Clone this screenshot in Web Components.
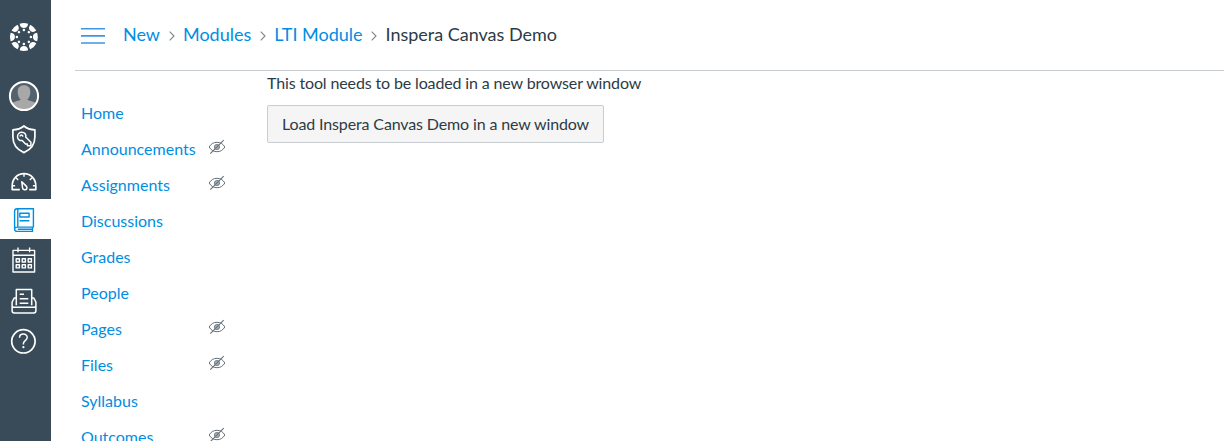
<!DOCTYPE html>
<html lang="en">
<head>
<meta charset="utf-8">
<title>Inspera Canvas Demo</title>
<style>
  html, body { height: 100%; }
  body {
    margin: 0;
    overflow: hidden;
    background: #fff;
    color: #2d3b45;
    font: 16px/24px Lato, "Liberation Sans", sans-serif;
    --brand: #008ee2;
    --rail: #394b58;
    --line: #c7cdd1;
  }
</style>
</head>
<body>
<lms-app>
  <lms-rail slot="rail">
    <rail-item icon="logo" style="--h: 74px"></rail-item>
    <rail-item icon="avatar" style="--h: 45px"></rail-item>
    <rail-item icon="admin"></rail-item>
    <rail-item icon="dashboard"></rail-item>
    <rail-item icon="courses" active></rail-item>
    <rail-item icon="calendar" style="--h: 41px"></rail-item>
    <rail-item icon="inbox" style="--h: 41px"></rail-item>
    <rail-item icon="help" style="--h: 41px"></rail-item>
  </lms-rail>
  <lms-crumbs slot="header">
    <lms-crumb href="#">New</lms-crumb>
    <lms-crumb href="#">Modules</lms-crumb>
    <lms-crumb href="#">LTI Module</lms-crumb>
    <lms-crumb>Inspera Canvas Demo</lms-crumb>
  </lms-crumbs>
  <course-nav slot="nav">
    <nav-entry>Home</nav-entry>
    <nav-entry unlisted>Announcements</nav-entry>
    <nav-entry unlisted>Assignments</nav-entry>
    <nav-entry>Discussions</nav-entry>
    <nav-entry>Grades</nav-entry>
    <nav-entry>People</nav-entry>
    <nav-entry unlisted>Pages</nav-entry>
    <nav-entry unlisted>Files</nav-entry>
    <nav-entry>Syllabus</nav-entry>
    <nav-entry unlisted>Outcomes</nav-entry>
  </course-nav>
  <tool-launch label="Load Inspera Canvas Demo in a new window">This tool needs to be loaded in a new browser window</tool-launch>
</lms-app>

<script>
'use strict';

// ── Icons ────────────────────────────────────────────────────
// Each one is drawn around its own origin, one unit per pixel.

const ANGLES = [0, 45, 90, 135, 180, 225, 270, 315];

const ICONS = {
  logo: ANGLES.map(a => `<g transform="rotate(${a})" fill="#fff" stroke="none">
      <path d="M-4.2-13.3A13.9 13.9 0 0 1 4.2-13.3C3.9-10.3 2.3-9 0-9S-3.9-10.3-4.2-13.3Z"/>
      <circle cy="-7" r="1.25"/></g>`).join(''),

  avatar: `<circle r="14.2" fill="#53626d" stroke="none"/>
    <path fill="#a8a8a8" stroke="none" d="M-12 7.4C-9.5 5-4 5-3.4 3.6C-5.5 1.5-6.3-1.3-6.3-4.3C-6.3-8.5-3.8-10.7 0-10.7S6.3-8.5 6.3-4.3C6.3-1.3 5.5 1.5 3.4 3.6C4 5 9.5 5 12 7.4A14 14 0 0 1-12 7.4Z"/>
    <circle r="14.1" stroke-width="2"/>`,

  admin: `<path d="M0-13.3C3.2-10.7 7-9.6 11-9.4V-2.5C11 5.5 6.7 10.5 0 13.3C-6.7 10.5-11 5.5-11-2.5V-9.4C-7-9.6-3.2-10.7 0-13.3Z"/>
    <path stroke-width="1.5" d="M1.8-2.3L7 3V6.5H3.5V4.6H1.6L-1.7 1.1C-3.8 1.8-6.4.2-6.4-2.6C-6.4-5.3-4.4-7-2.1-7C.8-7 2.7-4.6 1.8-2.3Z"/>
    <path stroke-width="1.4" d="M-3.9-2.7A1.7 1.7 0 0 1-2.2-4.4L-.7-2.9"/>`,

  dashboard: `<path d="M-4.2 7.9H-11.8V4.2C-11.8-3-6.7-8.1 0-8.1S11.8-3 11.8 4.2V7.9H5.2"/>
    <path stroke-width="1.4" d="M0-8V-5M-8.2-3.9L-5.8-1.8M8.2-3.9L5.8-1.8M-11.5 4H-8.9M11.5 4H8.9"/>
    <path stroke-width="1.5" d="M-2.2.1L2.5 4.7C3.6 6.2 2.7 8 1.1 8.1C-.4 8.2-1.4 7.2-1.5 5.8Z"/>`,

  courses: `<path stroke-width="1.4" d="M9.4 7.1V-11.2H-6.9C-8.5-11.2-9.4-10.2-9.4-8.8V9C-9.4 10.5-8.4 11.4-6.9 11.4H8.5V7.1M9.8 7.1H-6.8C-8.4 7.1-9.4 7.8-9.4 9M-6.2-11V7M-6.2 9.3H8.5"/>
    <path stroke-width="1.4" d="M-4.2-6.8H5.1V-3H-4.2ZM-4.5 .8H5.4"/>`,

  calendar: `<path stroke-width="1.4" d="M-10.8-9.6H10.8V12H-10.8ZM-10.8-4.8H10.8M-5.8-12.5V-7.7M5.8-12.5V-7.7"/>
    <path stroke-width="1.4" d="${[-6, 0, 6].map(x => [0.2, 6.1].map(y => `M${x - 1.6} ${y - 1.4}h3.2v3.2h-3.2Z`).join('')).join('')}"/>`,

  inbox: `<path stroke-width="1.5" d="M-7.7 4.2V-11.4H7.7V4.2M-7.7-2.9H-9.8L-11.9 1V9.7C-11.9 11.2-11 11.9-9.7 11.9H9.7C11 11.9 11.9 11.2 11.9 9.7V1L9.8-2.9H7.7M-11.9 3.2V4.8C-11.9 5.6-11.3 6.2-10.4 6.2H10.4C11.3 6.2 11.9 5.6 11.9 4.8V3.2"/>
    <path stroke-width="1.4" d="M-4.3-6.8H0M-4.3-2.2H4.3M-4.3 2.3H4.3"/>`,

  help: `<circle r="11.7"/>
    <path stroke-width="1.5" d="M-3.9-3.5C-3.9-5.9-2.4-7.2-.1-7.2S3.8-5.8 3.8-3.7C3.8-.8 0-.5 0 2.2V3.2"/>
    <circle cy="5.9" r="1.1" fill="currentColor" stroke="none"/>`,
};

// Offset of each icon's centre inside the 51px wide cell.
const CENTRES = {
  logo: [23.9, 37],
  avatar: [24, 22],
  admin: [23.9, 20.3],
  dashboard: [24, 22.7],
  courses: [24, 21],
  calendar: [23.8, 21],
  inbox: [24, 21],
  help: [23.4, 20.3],
};

// ── Base ─────────────────────────────────────────────────────

class BaseElement extends HTMLElement {
  connectedCallback() {
    if (this.shadowRoot) return;
    this.attachShadow({ mode: 'open' });
    this.shadowRoot.innerHTML = `<style>${this.styles()}</style>${this.render()}`;
  }
  styles() { return ':host { display: block; }'; }
  render() { return '<slot></slot>'; }
}

// ── Page frame ───────────────────────────────────────────────

class LmsApp extends BaseElement {
  styles() {
    return `
      :host { display: grid; grid-template-columns: 51px 1fr; height: 100vh; overflow: hidden; }
      .page { display: flex; flex-direction: column; min-width: 0; padding-left: 24px; }
      .body { display: grid; grid-template-columns: 192px 1fr; }
    `;
  }
  render() {
    return `
      <slot name="rail"></slot>
      <div class="page">
        <slot name="header"></slot>
        <div class="body"><slot name="nav"></slot><main><slot></slot></main></div>
      </div>`;
  }
}

// ── Global navigation ────────────────────────────────────────

class LmsRail extends BaseElement {
  styles() {
    return ':host { display: flex; flex-direction: column; background: var(--rail); color: #fff; }';
  }
}

class RailItem extends BaseElement {
  styles() {
    return `
      :host { display: block; flex: none; height: var(--h, 40px); }
      :host([active]) { background: #fff; color: var(--brand); }
      svg { display: block; width: 100%; height: 100%; overflow: visible; }
    `;
  }
  render() {
    const icon = this.getAttribute('icon');
    const [x, y] = CENTRES[icon];
    return `<svg aria-hidden="true"><g transform="translate(${x} ${y})" fill="none"
      stroke="currentColor" stroke-width="1.7" stroke-linejoin="round">${ICONS[icon]}</g></svg>`;
  }
}

// ── Breadcrumbs ──────────────────────────────────────────────

class LmsCrumbs extends BaseElement {
  styles() {
    return `
      :host {
        display: flex; align-items: center; box-sizing: border-box; height: 71px;
        padding: 0 6px 2px; border-bottom: 1px solid var(--line); font-size: 18px;
      }
      button { width: 24px; height: 16px; margin: 4px 18px 0 0; padding: 0; border: 0; background: none; color: var(--brand); }
      svg { display: block; }
    `;
  }
  render() {
    return `
      <button aria-label="Menu"><svg width="24" height="16" fill="#3f97e4">
        <path d="M0 0h24v1.5H0zM0 7h24v1.7H0zM0 14.3h24v1.5H0z"/></svg></button>
      <slot></slot>`;
  }
}

class LmsCrumb extends BaseElement {
  styles() {
    return `
      :host { display: flex; align-items: center; white-space: nowrap; letter-spacing: -.01px; }
      a { color: var(--brand); text-decoration: none; }
      svg { width: 6px; height: 10px; margin: 4px 8px 0 9px; fill: none; stroke: #7d868c; stroke-width: 1.1; }
    `;
  }
  render() {
    return this.hasAttribute('href')
      ? '<a href="#"><slot></slot></a><svg viewBox="0 0 6 10"><path d="M.7.7L5 5L.7 9.3"/></svg>'
      : '<span><slot></slot></span>';
  }
}

// ── Course navigation ────────────────────────────────────────

class CourseNav extends BaseElement {
  styles() {
    return ':host { display: flex; flex-direction: column; padding: 24px 0 0 6px; }';
  }
}

class NavEntry extends BaseElement {
  styles() {
    return `
      :host { display: flex; align-items: center; justify-content: space-between; height: 36px; width: 145px; }
      a { color: var(--brand); text-decoration: none; }
      svg { width: 18px; height: 16px; margin-top: -5px; fill: none; stroke: #66717a; }
    `;
  }
  render() {
    const eye = `<svg viewBox="0 0 18 16"><path d="M1.2 8C3 4.8 5.6 3.3 9 3.3S15 4.8 16.8 8C15 11.2 12.4 12.7 9 12.7S3 11.2 1.2 8Z"/>
      <circle cx="9" cy="8" r="2.6" fill="#aab1b6" stroke-width=".8"/><path d="M2.3 14.7L15.7 1.2" stroke-width="1.1"/></svg>`;
    return `<a href="#"><slot></slot></a>${this.hasAttribute('unlisted') ? eye : ''}`;
  }
}

// ── Tool launch ──────────────────────────────────────────────

class ToolLaunch extends BaseElement {
  styles() {
    return `
      :host { display: flex; flex-direction: column; align-items: flex-start; gap: 10px; letter-spacing: -.135px; }
      button {
        box-sizing: border-box; height: 38px; padding: 0 14px; color: inherit; font: inherit; letter-spacing: inherit;
        background: #f5f5f5; border: 1px solid var(--line); border-radius: 2px; white-space: nowrap;
      }
    `;
  }
  render() {
    return `<div><slot></slot></div><button>${this.getAttribute('label')}</button>`;
  }
}

customElements.define('lms-app', LmsApp);
customElements.define('lms-rail', LmsRail);
customElements.define('rail-item', RailItem);
customElements.define('lms-crumbs', LmsCrumbs);
customElements.define('lms-crumb', LmsCrumb);
customElements.define('course-nav', CourseNav);
customElements.define('nav-entry', NavEntry);
customElements.define('tool-launch', ToolLaunch);
</script>
</body>
</html>
